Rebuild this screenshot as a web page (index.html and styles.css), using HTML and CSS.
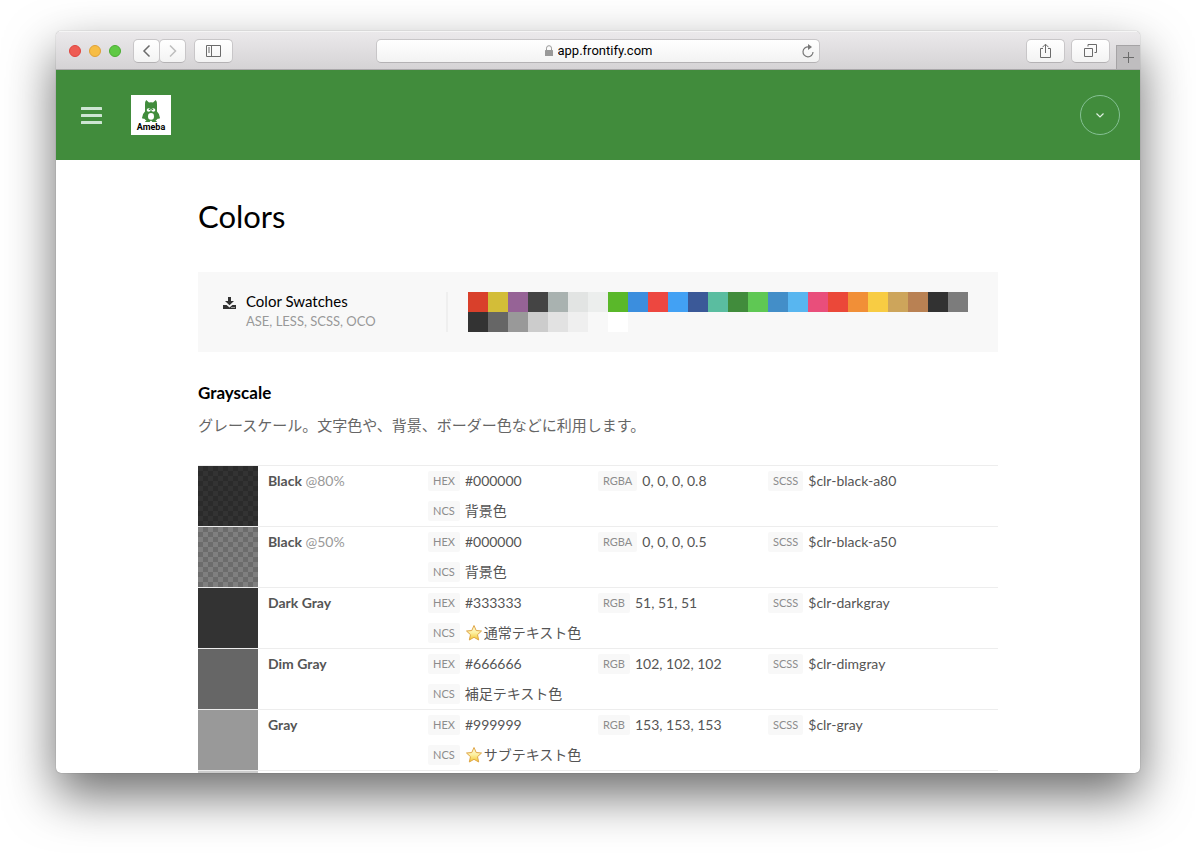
FILE: index.html
```html
<!DOCTYPE html>
<html lang="ja">

<head>
  <meta charset="UTF-8">
  <meta name="viewport" content="width=device-width, initial-scale=1.0">
  <title>Colors</title>
  <link rel="stylesheet" href="styles.css">
</head>

<body>
  <div class="window">
    <div class="toolbar">
      <div class="toolbar-left">
        <div class="lights">
          <span class="light red"></span>
          <span class="light yellow"></span>
          <span class="light green"></span>
        </div>
        <div class="nav">
          <button class="tool nav-button" type="button">
            <svg width="10" height="14" viewBox="0 0 10 14"><path d="M7.500 1.500L2 7L7.500 12.500" fill="none" stroke="#6b6b6b" stroke-width="1.5"/></svg>
          </button>
          <button class="tool nav-button" type="button">
            <svg width="10" height="14" viewBox="0 0 10 14"><path d="M2 1.500L7.500 7L2 12.500" fill="none" stroke="#bdbdbd" stroke-width="1.5"/></svg>
          </button>
        </div>
        <button class="tool" type="button">
          <svg width="15" height="12" viewBox="0 0 15 12"><path d="M.5.5h14v11H.5zM5.5.5v11M2 3h2M2 5h2M2 7h2" fill="none" stroke="#6b6b6b"/></svg>
        </button>
      </div>
      <div class="address">
        <svg width="8" height="11" viewBox="0 0 8 11"><path d="M1.5 5V3.2a2.5 2.5 0 0 1 5 0V5" fill="none" stroke="#999"/><rect y="5" width="8" height="6" rx=".5" fill="#999"/></svg>
        <input class="url" type="text" value="app.frontify.com" aria-labelledby="page-title">
        <button class="reload" type="button">
          <svg width="12" height="14" viewBox="0 0 12 14"><path d="M6.5 2.9A5 5 0 1 0 11 8" fill="none" stroke="#777" stroke-width="1.2"/><path d="M6 0l4 3l-4 3z" fill="#777"/></svg>
        </button>
      </div>
      <div class="toolbar-right">
        <button class="tool" type="button">
          <svg width="13" height="16" viewBox="0 0 13 16"><path d="M4 5.5H1.5v9h10v-9H9M6.5 10V1.5M3.5 4.2l3-3l3 3" fill="none" stroke="#6b6b6b"/></svg>
        </button>
        <button class="tool" type="button">
          <svg width="13" height="13" viewBox="0 0 13 13"><path d="M.5 4.5h8v8h-8zM4 2.500v-2h8.500v8h-2" fill="none" stroke="#6b6b6b"/></svg>
        </button>
        <button class="new-tab" type="button">
          <svg width="11" height="11" viewBox="0 0 11 11"><path d="M5.5 0v11M0 5.5h11" fill="none" stroke="#6b6b6b"/></svg>
        </button>
      </div>
    </div>

    <header class="header">
      <button class="menu" type="button">
        <svg width="21" height="17" viewBox="0 0 21 17" fill="#cde5d3"><rect width="21" height="3" rx=".5"/><rect y="7" width="21" height="3" rx=".5"/><rect y="14" width="21" height="3" rx=".5"/></svg>
      </button>
      <a class="logo" href="#">
        <svg width="40" height="40" viewBox="0 0 40 40">
          <path d="M15.2 5L18 7.4Q20 7 22 7.4L24.800 5Q26.400 7 26 9.500V16.500Q28.900 19 29 23Q29 24 26.600 23.800Q26 25 24.400 25.400Q26.400 26 25.800 27H21.300Q20.800 25.700 20 25.700Q19.200 25.700 18.700 27H14.200Q13.600 26 15.600 25.400Q14 25 13.400 23.800Q11 24 11 23Q11.100 19 14 16.500V9.500Q13.600 7 15.200 5z" fill="#418c3c"/>
          <ellipse cx="17.7" cy="15" rx="2" ry="1.800" fill="#fff"/>
          <ellipse cx="22.3" cy="15" rx="2" ry="1.800" fill="#fff"/>
          <circle cx="18.4" cy="14.4" r=".7" fill="#418c3c"/>
          <circle cx="21.6" cy="14.4" r=".7" fill="#418c3c"/>
          <ellipse cx="20" cy="21.4" rx="3" ry="3.3" fill="#fff"/>
          <text class="logo-text" x="20" y="35" text-anchor="middle">Ameba</text>
        </svg>
      </a>
      <button class="account" type="button">
        <svg width="8" height="5" viewBox="0 0 8 5"><path d="M.5.5L4 4L7.5.5" fill="none" stroke="#e0f0e2" stroke-width="1.2"/></svg>
      </button>
    </header>

    <main class="page">
      <div class="content">
        <h1 class="title" id="page-title">Colors</h1>

        <section class="card">
          <a class="download" href="#">
            <svg width="13" height="12" viewBox="0 0 13 12"><path d="M5 0h3v4h3L6.500 8.300L2 4h3zM0 8h3.600l2.900 2.400L9.400 8H13v4H0z" fill="#333"/><path d="M8.500 10h1v1h-1zM10.500 10h1v1h-1z" fill="#f8f8f8"/></svg>
            <span class="download-text">
              <span class="download-title">Color Swatches</span>
              <span class="download-formats">ASE, LESS, SCSS, OCO</span>
            </span>
          </a>
          <div class="swatches"></div>
        </section>

        <h2 class="subtitle">Grayscale</h2>
        <p class="description">グレースケール。文字色や、背景、ボーダー色などに利用します。</p>

        <table class="colors">
          <tr>
            <td class="chip"><div class="alpha a80"></div></td>
            <td class="name"><b>Black</b> @80%</td>
            <td class="values">
              <div class="value"><span class="tag">HEX</span>#000000</div>
              <div class="value"><span class="tag">NCS</span>背景色</div>
            </td>
            <td class="values"><div class="value"><span class="tag">RGBA</span>0, 0, 0, 0.8</div></td>
            <td><div class="value"><span class="tag">SCSS</span>$clr-black-a80</div></td>
          </tr>
          <tr>
            <td class="chip"><div class="alpha a50"></div></td>
            <td class="name"><b>Black</b> @50%</td>
            <td class="values">
              <div class="value"><span class="tag">HEX</span>#000000</div>
              <div class="value"><span class="tag">NCS</span>背景色</div>
            </td>
            <td class="values"><div class="value"><span class="tag">RGBA</span>0, 0, 0, 0.5</div></td>
            <td><div class="value"><span class="tag">SCSS</span>$clr-black-a50</div></td>
          </tr>
          <tr>
            <td class="chip darkgray"></td>
            <td class="name"><b>Dark Gray</b></td>
            <td class="values">
              <div class="value"><span class="tag">HEX</span>#333333</div>
              <div class="value"><span class="tag">NCS</span><svg class="star" width="18" height="18" viewBox="0 0 18 18"><use href="#star"/></svg>通常テキスト色</div>
            </td>
            <td class="values"><div class="value"><span class="tag">RGB</span>51, 51, 51</div></td>
            <td><div class="value"><span class="tag">SCSS</span>$clr-darkgray</div></td>
          </tr>
          <tr>
            <td class="chip dimgray"></td>
            <td class="name"><b>Dim Gray</b></td>
            <td class="values">
              <div class="value"><span class="tag">HEX</span>#666666</div>
              <div class="value"><span class="tag">NCS</span>補足テキスト色</div>
            </td>
            <td class="values"><div class="value"><span class="tag">RGB</span>102, 102, 102</div></td>
            <td><div class="value"><span class="tag">SCSS</span>$clr-dimgray</div></td>
          </tr>
          <tr>
            <td class="chip gray"></td>
            <td class="name"><b>Gray</b></td>
            <td class="values">
              <div class="value"><span class="tag">HEX</span>#999999</div>
              <div class="value"><span class="tag">NCS</span><svg class="star" width="18" height="18" viewBox="0 0 18 18"><use href="#star"/></svg>サブテキスト色</div>
            </td>
            <td class="values"><div class="value"><span class="tag">RGB</span>153, 153, 153</div></td>
            <td><div class="value"><span class="tag">SCSS</span>$clr-gray</div></td>
          </tr>
          <tr>
            <td class="chip lightgray"></td>
            <td colspan="4"></td>
          </tr>
        </table>
      </div>
    </main>
  </div>

  <svg class="defs" width="0" height="0">
    <defs>
      <linearGradient id="gold" x1="0" y1="0" x2="0" y2="1">
        <stop offset="0" stop-color="#fffbe0"/>
        <stop offset=".5" stop-color="#fdf0a0"/>
        <stop offset="1" stop-color="#f2c52e"/>
      </linearGradient>
      <path id="star" d="M9 1.500L11.200 6.500L16.500 7L12.500 10.700L13.700 16L9 13.300L4.300 16L5.500 10.700L1.500 7L6.800 6.500z" fill="url(#gold)" stroke="#dfa647" stroke-width="1" stroke-linejoin="round"/>
    </defs>
  </svg>

  <script>
    const colors = [
      "#d9402b", "#d3bd38", "#966396", "#444444", "#a9b2b0", "#e2e4e3", "#eceeed", "#5ab82a", "#3b8ede", "#ed4740",
      "#42a1f4", "#3b5998", "#5abda0", "#418c3c", "#5fc854", "#438ec8", "#58b6f0", "#e94e7b", "#eb4839", "#f18f37",
      "#f8cc43", "#cda55b", "#b98153", "#323232", "#7c7c7c",
      "#333333", "#666666", "#999999", "#cccccc", "#e2e2e2", "#efefef", "#f8f8f8", "#ffffff"
    ];
    let swatches_html = "";
    colors.forEach(color => {
      swatches_html += `<span class="swatch" style="background: ${color}"></span>`;
    });
    document.querySelector(".swatches").innerHTML = swatches_html;
  </script>
</body>

</html>
```

FILE: styles.css
```css
* {
  box-sizing: border-box;
}

body {
  display: flex;
  height: 100vh;
  margin: 0;
  padding: 31px 56px 80px;
  overflow: hidden;
  background: #fff;
  color: #555;
  font-family: Lato, "Noto Sans CJK JP", sans-serif;
  font-size: 14px;
}

button {
  display: flex;
  align-items: center;
  justify-content: center;
  padding: 0;
  border: 0;
  background: none;
}

.defs {
  position: absolute;
}

.window {
  display: flex;
  flex: 1;
  flex-direction: column;
  min-width: 0;
  overflow: hidden;
  border-radius: 5px;
  background: #fff;
  box-shadow: 0 0 1px rgba(0, 0, 0, 0.5), 0 22px 50px rgba(0, 0, 0, 0.58);
}

/* browser toolbar */

.toolbar {
  display: grid;
  grid-template-columns: 1fr minmax(0, 444px) 1fr;
  flex: none;
  align-items: center;
  height: 39px;
  border-top: 1px solid #f5f5f5;
  border-bottom: 1px solid #aaa8aa;
  background: linear-gradient(#ebe9eb, #d5d3d5);
}

.toolbar-left,
.toolbar-right {
  display: flex;
  align-items: center;
}

.toolbar-left {
  gap: 8px;
  padding-left: 13px;
}

.toolbar-right {
  align-self: stretch;
  justify-content: flex-end;
  gap: 6px;
}

.lights {
  display: flex;
  gap: 8px;
  margin-right: 4px;
}

.light {
  width: 12px;
  height: 12px;
  border: 1px solid;
  border-radius: 50%;
}

.red {
  border-color: #e0443e;
  background: #ee5c54;
}

.yellow {
  border-color: #e0a136;
  background: #f7bd45;
}

.green {
  border-color: #4aad32;
  background: #5fc944;
}

.nav {
  display: flex;
}

.tool,
.address {
  height: 24px;
  border: 1px solid #c8c6c8;
  border-bottom-color: #b4b2b4;
  border-radius: 5px;
  background: linear-gradient(#fff, #f3f3f3);
}

.tool {
  width: 39px;
}

.nav-button {
  width: 27px;
}

.nav-button + .nav-button {
  margin-left: -1px;
}

.address {
  position: relative;
  display: flex;
  align-items: center;
  justify-content: center;
  gap: 5px;
}

.url {
  width: 94px;
  padding: 0;
  border: 0;
  outline: 0;
  background: none;
  color: #000;
  font-family: Roboto, sans-serif;
  font-size: 13px;
}

.reload {
  position: absolute;
  right: 5px;
}

.new-tab {
  align-self: flex-end;
  width: 24px;
  height: 24px;
  border-top: 1px solid #a5a3a5;
  border-left: 1px solid #a5a3a5;
  background: #bfbdbf;
}

/* green header */

.header {
  display: flex;
  flex: none;
  align-items: center;
  height: 90px;
  padding: 0 20px 0 25px;
  background: #418c3c;
}

.logo {
  display: block;
  height: 40px;
  margin-left: 29px;
  background: #fff;
}

.logo-text {
  fill: #000;
  font-family: Roboto, sans-serif;
  font-size: 9px;
  font-weight: bold;
}

.account {
  width: 40px;
  height: 40px;
  margin-left: auto;
  border: 1px solid #85c194;
  border-radius: 50%;
}

/* page */

.page {
  flex: 1;
  min-height: 0;
  overflow-y: auto;
  scrollbar-width: none;
}

.content {
  max-width: 800px;
  margin: 0 auto;
  padding-top: 36px;
}

.title {
  margin: 0 0 36px;
  color: #000;
  font-size: 31px;
  font-weight: normal;
  line-height: 40px;
}

.card {
  display: flex;
  padding: 20px 30px 20px 25px;
  background: #f8f8f8;
}

.download {
  display: flex;
  flex: 1;
  gap: 10px;
  margin-right: 20px;
  border-right: 2px solid #efefef;
  text-decoration: none;
  line-height: 20px;
}

.download svg {
  margin-top: 5px;
}

.download-text {
  display: flex;
  flex-direction: column;
  margin-top: -1px;
}

.download-title {
  color: #000;
  font-size: 15px;
}

.download-formats {
  color: #999;
  font-size: 13px;
}

.swatches {
  display: flex;
  flex: 0 1 500px;
  flex-wrap: wrap;
}

.swatch {
  width: 20px;
  height: 20px;
}

.subtitle {
  margin: 31px 0 10px;
  color: #000;
  font-size: 17px;
  line-height: 20px;
}

.description {
  margin: 0 0 28px;
  color: #666;
  font-size: 15px;
  line-height: 24px;
}

.colors {
  width: 100%;
  border-spacing: 0;
  table-layout: fixed;
}

.colors td {
  height: 61px;
  padding: 0;
  border-top: 1px solid #ededed;
  vertical-align: top;
  line-height: 30px;
}

.colors .chip {
  width: 60px;
  background-clip: padding-box;
}

.colors .name {
  width: 170px;
  padding-left: 10px;
  color: #999;
}

.name b {
  color: #555;
}

.colors .values {
  width: 170px;
}

.value {
  display: flex;
  align-items: center;
  height: 30px;
}

.tag {
  margin-right: 5px;
  padding: 0 5px;
  border-radius: 2px;
  background: #f8f8f8;
  color: #8c8c8c;
  font-size: 11px;
  line-height: 20px;
}

.star {
  margin-right: 1px;
}

/* checkerboard under the transparent colors */

.alpha {
  height: 60px;
  background: repeating-conic-gradient(#d8d8d8 0 25%, #fff 0 50%) 0 0 / 10px 10px;
}

.alpha::before {
  display: block;
  height: 100%;
  background: #000;
  content: "";
}

.a80::before {
  opacity: 0.8;
}

.a50::before {
  opacity: 0.5;
}

.darkgray {
  background: #333;
}

.dimgray {
  background: #666;
}

.gray {
  background: #999;
}

.lightgray {
  background: #ccc;
}
```
